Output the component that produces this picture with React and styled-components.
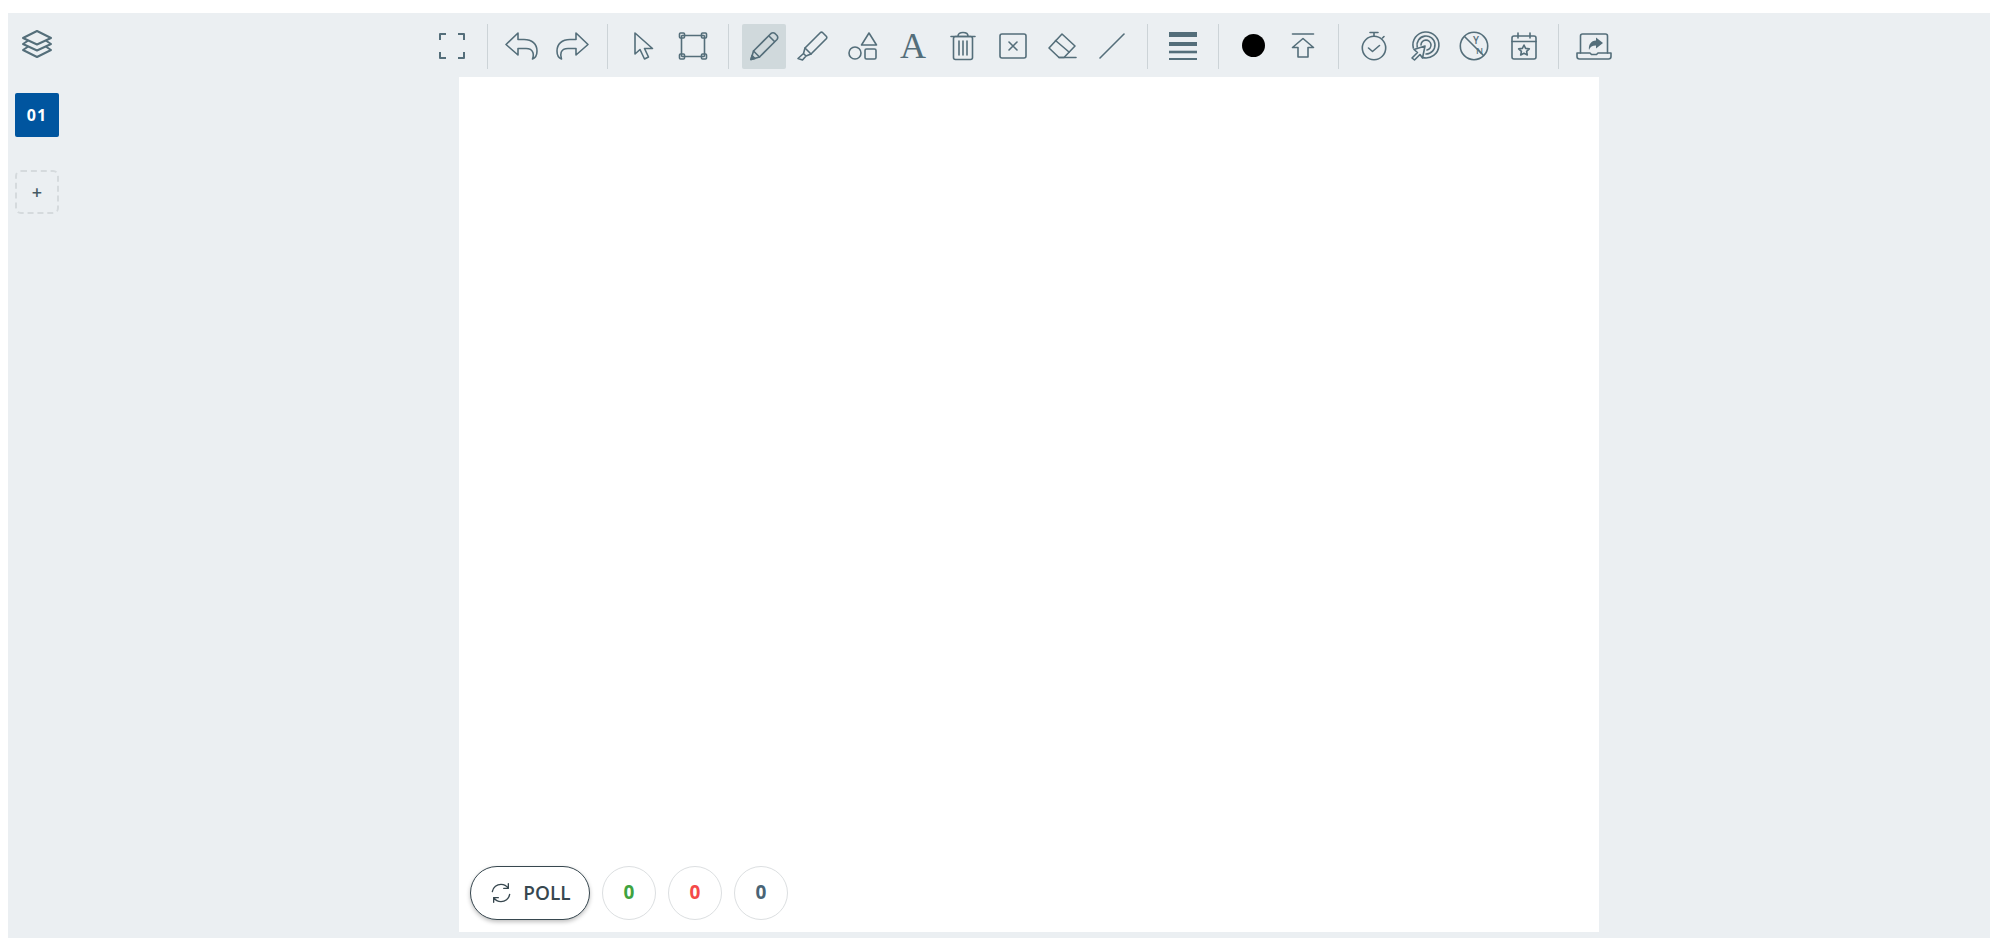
import React from 'react';
import styled, { createGlobalStyle } from 'styled-components';

const GlobalStyle = createGlobalStyle`
  html, body {
    margin: 0;
    padding: 0;
    background: #fff;
    font-family: 'Open Sans', 'Liberation Sans', sans-serif;
  }
`;

const Page = styled.div`
  height: 947px;
  padding: 13px 13px 9px 8px;
  box-sizing: border-box;
`;

const Panel = styled.div`
  height: 100%;
  display: flex;
  background: #ebeff2;
`;

const Sidebar = styled.aside`
  width: 60px;
  flex: none;
  display: flex;
  flex-direction: column;
  align-items: flex-start;
  padding: 8px 0 0 7px;
  box-sizing: border-box;
`;

const SideIcon = styled.div`
  width: 44px;
  height: 45px;
  display: flex;
  align-items: center;
  justify-content: center;
  color: #546e7a;
  margin-bottom: 27px;
`;

const PageTile = styled.div`
  width: 44px;
  height: 44px;
  border-radius: 2px;
  display: flex;
  align-items: center;
  justify-content: center;
  font-size: 16px;
  font-weight: 700;
  letter-spacing: 1px;
  color: #fff;
  background: #00559f;
  margin-bottom: 33px;
`;

const AddTile = styled.div`
  width: 44px;
  height: 44px;
  border: 2px dashed #d5dadd;
  border-radius: 6px;
  box-sizing: border-box;
  display: flex;
  align-items: center;
  justify-content: center;
  font-size: 18px;
  font-weight: 600;
  color: #455a64;
`;

const Main = styled.main`
  flex: 1;
  min-width: 0;
  display: flex;
  flex-direction: column;
  align-items: center;
`;

const Toolbar = styled.div`
  height: 64px;
  flex: none;
  display: flex;
  align-items: center;
  padding-top: 2px;
  box-sizing: border-box;
  margin-left: -12px;
  color: #546e7a;
`;

const ToolButton = styled.button`
  width: 44px;
  height: 45px;
  margin: 0 2.9px;
  padding: 0;
  border: 0;
  border-radius: 2px;
  display: flex;
  align-items: center;
  justify-content: center;
  color: inherit;
  background: ${(p) => (p.$active ? '#d0d9dc' : 'transparent')};
`;

const Divider = styled.span`
  width: 1px;
  height: 45px;
  margin: 0 10px;
  background: #ccd3d7;
`;

const TextGlyph = styled.span`
  font-family: 'Liberation Serif', serif;
  font-size: 36px;
  line-height: 36px;
`;

const Dot = styled.span`
  width: 23px;
  height: 23px;
  margin-top: -2px;
  border-radius: 50%;
  background: #000;
`;

const Canvas = styled.div`
  width: 1140px;
  height: 855px;
  flex: none;
  background: #fff;
  box-sizing: border-box;
  display: flex;
  align-items: flex-end;
  gap: 12px;
  padding: 0 0 12px 11px;
`;

const PollButton = styled.button`
  width: 120px;
  height: 54px;
  display: flex;
  align-items: center;
  justify-content: center;
  gap: 10px;
  padding: 0;
  border: 1.5px solid #37474f;
  border-radius: 27px;
  background: #fff;
  box-shadow: 0 2px 4px rgba(0, 0, 0, 0.25);
  font-family: inherit;
  font-size: 19px;
  font-weight: 600;
  color: #37474f;
`;

const Counter = styled.div`
  width: 54px;
  height: 54px;
  border: 1px solid #dcdfe1;
  border-radius: 50%;
  box-sizing: border-box;
  display: flex;
  align-items: center;
  justify-content: center;
  padding-bottom: 3px;
  font-size: 19px;
  font-weight: 700;
  color: ${(p) => p.$color};
`;

const Icon = ({ children, size = 36, width = 1.6 }) => (
  <svg
    width={size}
    height={size}
    viewBox="0 0 36 36"
    fill="none"
    stroke="currentColor"
    strokeWidth={width}
    strokeLinecap="round"
    strokeLinejoin="round"
  >
    {children}
  </svg>
);

const LayersIcon = () => (
  <Icon width={2}>
    <path d="M18 5L32 12L18 18.5L4 12Z" />
    <path d="M8.5 15L4 18L18 24.5L32 18L27.5 15" />
    <path d="M8.5 21L4 24L18 31L32 24L27.5 21" />
  </Icon>
);

const FullscreenIcon = () => (
  <Icon width={2}>
    <path d="M6 12V6H12M24 6H30V12M30 24V30H24M12 30H6V24" strokeLinecap="butt" />
  </Icon>
);

const UndoIcon = () => (
  <Icon>
    <path d="M2 16.5L14 5V11.5H20C28 11.5 33 16 33 23C33 27 31 30 28.5 31C30 27 30 20.5 22 20.5H14V27Z" />
  </Icon>
);

const RedoIcon = () => (
  <Icon>
    <path d="M34 16.5L22 5V11.5H16C8 11.5 3 16 3 23C3 27 5 30 7.5 31C6 27 6 20.5 14 20.5H22V27Z" />
  </Icon>
);

const CursorIcon = () => (
  <Icon>
    <path d="M10 5V26L15 21.5L19.5 31L23.5 29L19.5 20.5L27.5 20.5Z" />
  </Icon>
);

const SelectIcon = () => (
  <Icon>
    <path d="M7 7.5H29M7 28.5H29M6.5 8V28M29.5 8V28" />
    <rect x="4.5" y="5" width="5" height="5" rx="1" />
    <rect x="26.5" y="5" width="5" height="5" rx="1" />
    <rect x="4.5" y="26" width="5" height="5" rx="1" />
    <rect x="26.5" y="26" width="5" height="5" rx="1" />
  </Icon>
);

const PencilIcon = () => (
  <Icon>
    <path d="M5 31.5L7.5 23L25 5.5Q27 4 29 5.5L31 7.5Q32.5 9.5 31 11.5L13.5 29Z" />
    <path d="M7.5 23L13.5 29M23 8L28.5 13.5" />
    <path d="M5 31.5L6 27.5L9 30.5Z" fill="currentColor" />
  </Icon>
);

const HighlighterIcon = () => (
  <Icon>
    <path d="M25.5 4.5Q26.5 3.8 27.5 4.5L31.5 8.5Q32.2 9.5 31.5 10.5L16 26L10 20Z" />
    <path d="M10 20L8.5 25.5L11 28L16 26M8.5 25.5L3 30.5L7.5 32L11 28" />
  </Icon>
);

const ShapesIcon = () => (
  <Icon>
    <circle cx="10" cy="25" r="6" />
    <path d="M24 5L16.5 17H31.5Z" />
    <rect x="20" y="21" width="11" height="10" rx="1.5" />
  </Icon>
);

const TrashIcon = () => (
  <Icon>
    <path d="M6 8.5H30M13 8C13 5.5 15 4.5 18 4.5S23 5.5 23 8" />
    <rect x="8.5" y="8.5" width="19" height="23" rx="2" />
    <path d="M14 13V27M18 13V27M22 13V27" />
  </Icon>
);

const ClearIcon = () => (
  <Icon>
    <rect x="5" y="6" width="26" height="24" rx="2" />
    <path d="M14 14L22 22M22 14L14 22" />
  </Icon>
);

const EraserIcon = () => (
  <Icon>
    <path d="M18 6L31 18L20 29.5H15L5 20Z" />
    <path d="M11.5 12.5L25 24M15 29.5H32" />
  </Icon>
);

const LineIcon = () => (
  <Icon>
    <path d="M6 30L30 6" />
  </Icon>
);

const WeightIcon = () => (
  <svg width="36" height="36" viewBox="0 0 36 36" fill="currentColor">
    <rect x="4" y="4" width="28" height="5" />
    <rect x="4" y="14" width="28" height="4" />
    <rect x="4" y="22.7" width="28" height="2.6" />
    <rect x="4" y="30" width="28" height="2" />
  </svg>
);

const UploadIcon = () => (
  <Icon>
    <path d="M7.5 6H28.5" />
    <path d="M18 10.5L7.5 19.5H13V29H23V19.5H28.5Z" />
  </Icon>
);

const TimerIcon = () => (
  <Icon>
    <circle cx="18" cy="20" r="11.7" />
    <path d="M14 4.5H22M18 4.5V8M26.5 10L28 8.5" />
    <path d="M12.5 20L16.5 23.5L23.5 17.5" />
  </Icon>
);

const TargetIcon = () => (
  <Icon>
    <path d="M7.3 20A13 13 0 1 1 17 29.6" />
    <path d="M11.2 19A9 9 0 1 1 20 26" />
    <path d="M15 17A5 5 0 1 1 21 22" />
    <path d="M19 18L8 21.5L11.5 24.5L6 30L8.5 32L14 26.5L16.5 30Z" />
  </Icon>
);

const PollTextIcon = () => (
  <Icon>
    <circle cx="18" cy="18" r="13.7" />
    <path d="M9 9L27 27" />
    <text x="17" y="15.5" fontFamily="Open Sans" fontSize="10" fontWeight="600" fill="currentColor" stroke="none">Y</text>
    <text x="20" y="26" fontFamily="Open Sans" fontSize="9" fontWeight="600" fill="currentColor" stroke="none">N</text>
  </Icon>
);

const CalendarIcon = () => (
  <Icon>
    <rect x="6" y="8" width="24" height="23" rx="2" />
    <path d="M6 13.5H30M12 5V10M24 5V10" />
    <path d="M18 17L19.6 20.4L23.3 20.9L20.6 23.4L21.3 27L18 25.2L14.7 27L15.4 23.4L12.7 20.9L16.4 20.4Z" />
  </Icon>
);

const ShareIcon = () => (
  <Icon>
    <path d="M4.5 25V8Q4.5 6 6.5 6H29.5Q31.5 6 31.5 8V25" />
    <path d="M1 25H14L15.5 26.5H20.5L22 25H35V28.5Q35 31 32.5 31H3.5Q1 31 1 28.5Z" />
    <path d="M20 9.5L27 15L20 20.5V17.5C16.5 17.5 14 18.8 13 22C12.2 17 15 12.7 20 12.5Z" fill="currentColor" stroke="none" />
  </Icon>
);

const RefreshIcon = () => (
  <Icon size={24} width={2}>
    <path d="M5 16C6 9 12 5 18 5C23 5 27 8 29 11M29 4V11H22" />
    <path d="M31 20C30 27 24 31 18 31C13 31 9 28 7 25M7 32V25H14" />
  </Icon>
);

function App() {
  return (
    <Page>
      <GlobalStyle />
      <Panel>
        <Sidebar>
          <SideIcon>
            <LayersIcon />
          </SideIcon>
          <PageTile>01</PageTile>
          <AddTile>+</AddTile>
        </Sidebar>
        <Main>
          <Toolbar>
            <ToolButton><FullscreenIcon /></ToolButton>
            <Divider />
            <ToolButton><UndoIcon /></ToolButton>
            <ToolButton><RedoIcon /></ToolButton>
            <Divider />
            <ToolButton><CursorIcon /></ToolButton>
            <ToolButton><SelectIcon /></ToolButton>
            <Divider />
            <ToolButton $active><PencilIcon /></ToolButton>
            <ToolButton><HighlighterIcon /></ToolButton>
            <ToolButton><ShapesIcon /></ToolButton>
            <ToolButton><TextGlyph>A</TextGlyph></ToolButton>
            <ToolButton><TrashIcon /></ToolButton>
            <ToolButton><ClearIcon /></ToolButton>
            <ToolButton><EraserIcon /></ToolButton>
            <ToolButton><LineIcon /></ToolButton>
            <Divider />
            <ToolButton><WeightIcon /></ToolButton>
            <Divider />
            <ToolButton><Dot /></ToolButton>
            <ToolButton><UploadIcon /></ToolButton>
            <Divider />
            <ToolButton><TimerIcon /></ToolButton>
            <ToolButton><TargetIcon /></ToolButton>
            <ToolButton><PollTextIcon /></ToolButton>
            <ToolButton><CalendarIcon /></ToolButton>
            <Divider />
            <ToolButton><ShareIcon /></ToolButton>
          </Toolbar>
          <Canvas>
            <PollButton>
              <RefreshIcon />
              POLL
            </PollButton>
            <Counter $color="#3fa33f">0</Counter>
            <Counter $color="#f44949">0</Counter>
            <Counter $color="#4a6475">0</Counter>
          </Canvas>
        </Main>
      </Panel>
    </Page>
  );
}

export default App;
